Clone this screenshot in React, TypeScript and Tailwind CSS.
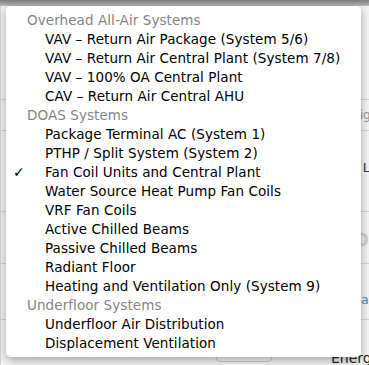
import React from "react";

type Row = { label: string; header?: boolean; checked?: boolean };

const rows: Row[] = [
  { label: "Overhead All-Air Systems", header: true },
  { label: "VAV – Return Air Package (System 5/6)" },
  { label: "VAV – Return Air Central Plant (System 7/8)" },
  { label: "VAV – 100% OA Central Plant" },
  { label: "CAV – Return Air Central AHU" },
  { label: "DOAS Systems", header: true },
  { label: "Package Terminal AC (System 1)" },
  { label: "PTHP / Split System (System 2)" },
  { label: "Fan Coil Units and Central Plant", checked: true },
  { label: "Water Source Heat Pump Fan Coils" },
  { label: "VRF Fan Coils" },
  { label: "Active Chilled Beams" },
  { label: "Passive Chilled Beams" },
  { label: "Radiant Floor" },
  { label: "Heating and Ventilation Only (System 9)" },
  { label: "Underfloor Systems", header: true },
  { label: "Underfloor Air Distribution" },
  { label: "Displacement Ventilation" },
];

export default function App() {
  return (
    <div
      className="relative w-[369px] h-[365px] overflow-hidden bg-[#ececec]"
      style={{ fontFamily: '"DejaVu Sans", "Liberation Sans", sans-serif' }}
    >
      {/* background page */}
      <div className="h-[6px] bg-gradient-to-b from-[#7d7d7d] to-[#b9b9b9]" />
      <div className="flex h-[359px]">
        <div className="w-[6px] border-r border-[#d4d4d4] bg-[#e6e6e6]" />
        <div className="flex-1 flex flex-col bg-[#f4f4f4] text-[12px] text-[#3a3a3a]">
          <div className="h-[95px] border-b border-[#d6d6d6]" />
          <div className="h-[32px] border-b border-[#d6d6d6] flex items-center pl-[306px] text-[#9a9a9a]">AHU Design</div>
          <div className="h-[82px] border-b border-[#d6d6d6] flex items-center pl-[302px] pb-[6px]">
            <span className="text-[17px] font-bold text-[#d0d0d0]">7,357</span>
            <span className="ml-[6px] text-[13px]">L/s</span>
          </div>
          <div className="h-[52px] border-b border-[#d6d6d6] flex items-center pl-[302px] pt-[6px] text-[17px] font-bold text-[#d0d0d0]">10,190</div>
          <div className="h-[57px] border-b border-[#d6d6d6] flex items-center pt-[18px]">
            <span className="pl-[212px] w-[314px] text-[#c8c8c8]">Zoning</span>
            <span className="text-[#4a7fd0]">Peak Load</span>
          </div>
          <div className="flex-1 flex items-start pt-[12px]">
            <div className="ml-[215px] w-[56px] h-[30px] rounded-[4px] border border-[#c8c8c8] bg-[#f8f8f8]" />
            <div className="ml-[59px] mt-[19px] text-[#222] text-[14px] leading-[14px]">Energy</div>
          </div>
        </div>
      </div>

      {/* popup menu */}
      <div className="absolute left-[6px] top-[6px] w-[355px] h-[351px] rounded-[5px] bg-white/[0.98] shadow-[0_3px_10px_rgba(0,0,0,0.35)] pt-[5px] pb-[5px]">
        {rows.map((r, i) => (
          <div
            key={i}
            className="relative h-[19px] flex items-center text-[13.5px] tracking-[0.08px] leading-[19px] whitespace-nowrap"
          >
            {r.checked && (
              <span className="absolute left-[7px] text-[14px] tracking-normal text-black">✓</span>
            )}
            <span
              className={
                r.header
                  ? "pl-[21px] text-[#858585]"
                  : "pl-[39px] text-black"
              }
            >
              {r.label}
            </span>
          </div>
        ))}
      </div>
    </div>
  );
}
